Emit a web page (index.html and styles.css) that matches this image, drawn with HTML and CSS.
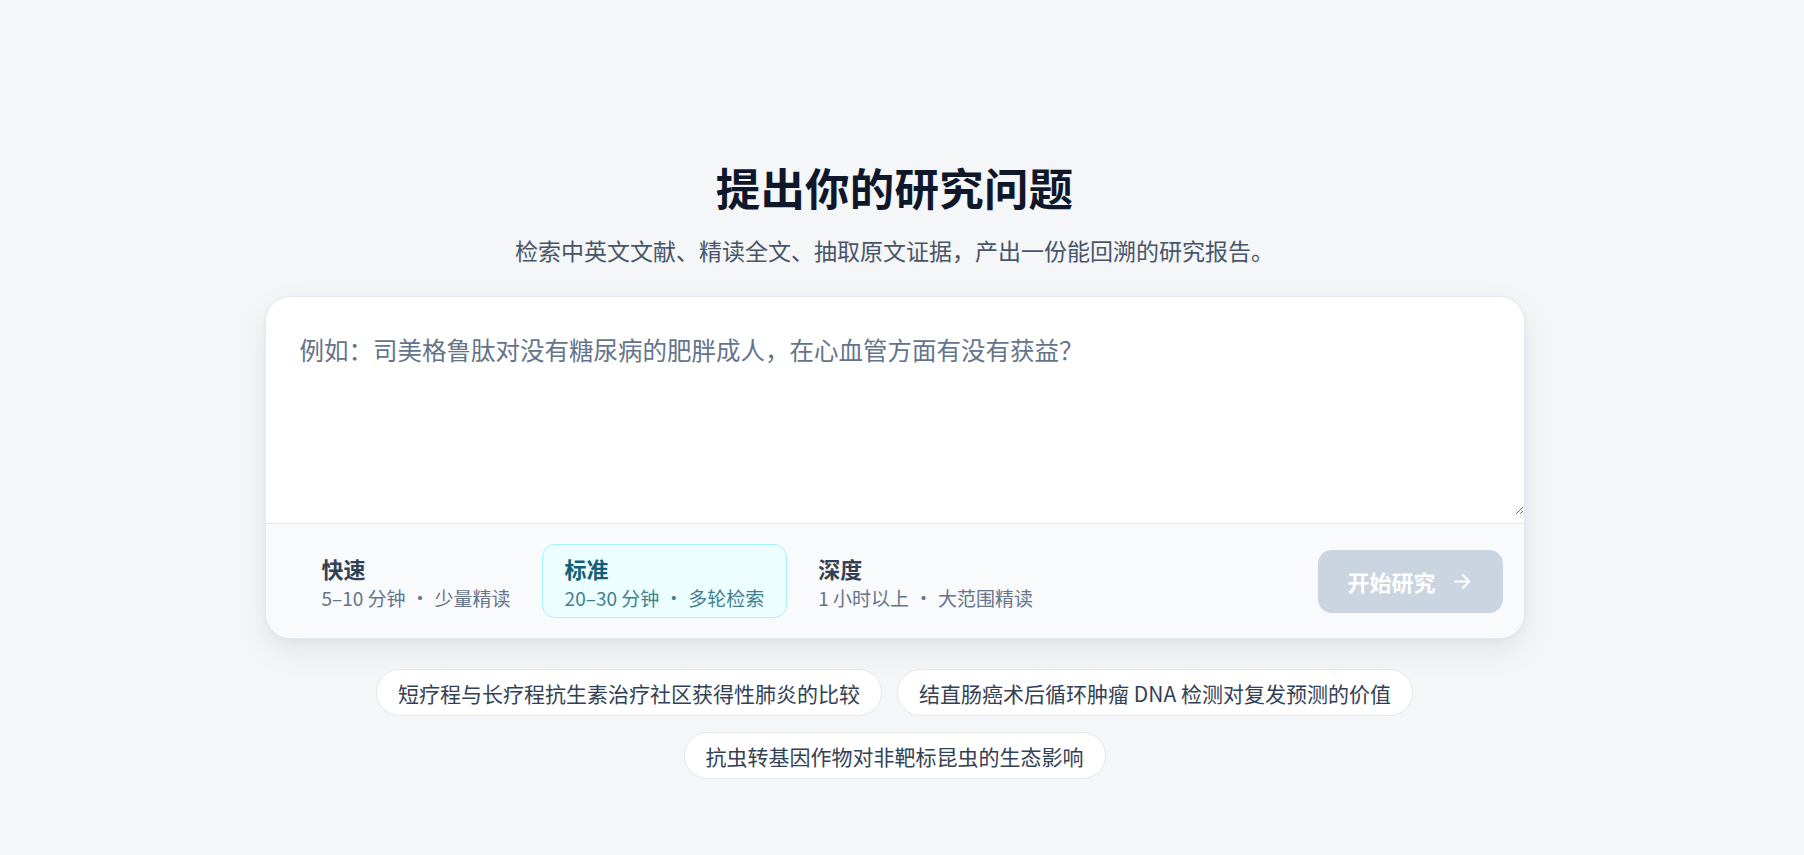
FILE: index.html
```html
<!DOCTYPE html>
<html lang="zh-CN">
<head>
<meta charset="utf-8">
<title>提出你的研究问题</title>
<link rel="stylesheet" href="styles.css">
</head>
<body>
<main class="page">
  <h1 class="title">提出你的研究问题</h1>
  <p class="subtitle">检索中英文文献、精读全文、抽取原文证据，产出一份能回溯的研究报告。</p>

  <section class="composer">
    <div class="question-wrap">
      <textarea class="question" placeholder="例如：司美格鲁肽对没有糖尿病的肥胖成人，在心血管方面有没有获益？"></textarea>
    </div>
    <div class="composer-footer">
      <div class="modes">
        <button class="mode" type="button">
          <span class="mode-name">快速</span>
          <span class="mode-desc">5–10 分钟<span class="sep">·</span>少量精读</span>
        </button>
        <button class="mode is-active" type="button">
          <span class="mode-name">标准</span>
          <span class="mode-desc">20–30 分钟<span class="sep">·</span>多轮检索</span>
        </button>
        <button class="mode" type="button">
          <span class="mode-name">深度</span>
          <span class="mode-desc">1 小时以上<span class="sep">·</span>大范围精读</span>
        </button>
      </div>
      <button class="start" type="button" disabled>
        <span>开始研究</span>
        <svg class="arrow" viewBox="0 0 20 20" width="21" height="21" aria-hidden="true">
          <path d="M3 10h13.5M10.5 4 16.5 10l-6 6" fill="none" stroke="currentColor" stroke-width="2" stroke-linecap="round" stroke-linejoin="round"/>
        </svg>
      </button>
    </div>
  </section>

  <div class="examples">
    <button class="chip" type="button">短疗程与长疗程抗生素治疗社区获得性肺炎的比较</button>
    <button class="chip" type="button">结直肠癌术后循环肿瘤 DNA 检测对复发预测的价值</button>
    <button class="chip" type="button">抗虫转基因作物对非靶标昆虫的生态影响</button>
  </div>
</main>
</body>
</html>
```

FILE: styles.css
```css
* {
  box-sizing: border-box;
}

html, body {
  margin: 0;
  padding: 0;
}

body {
  background: #f4f6f8;
  font-family: "Noto Sans CJK SC", "Noto Sans", sans-serif;
  color: #0f172a;
  min-height: 100vh;
}

/* right padding mirrors the scrollbar gutter of the original layout */
.page {
  display: flex;
  flex-direction: column;
  align-items: center;
  padding: 160px 15px 40px 0;
}

.title {
  margin: 0;
  font-size: 44.5px;
  line-height: 53px;
  font-weight: 700;
  color: #0f172a;
  letter-spacing: 0.2px;
}

.subtitle {
  margin: 20px 0 0;
  font-size: 23px;
  line-height: 35px;
  color: #475569;
}

.composer {
  margin-top: 28px;
  width: 1260px;
  background: #ffffff;
  border: 1px solid #e2e8f0;
  border-radius: 26px;
  box-shadow: 0 12px 32px rgba(15, 23, 42, 0.08), 0 2px 6px rgba(15, 23, 42, 0.03);
  overflow: hidden;
}

.question-wrap {
  padding-bottom: 8px;
  background: #ffffff;
}

.question {
  display: block;
  width: 100%;
  height: 218px;
  border: none;
  outline: none;
  resize: vertical;
  padding: 33px 34px;
  font-family: inherit;
  font-size: 24.5px;
  line-height: 40px;
  color: #0f172a;
  background: #ffffff;
}

.question::placeholder {
  color: #64748b;
}

.composer-footer {
  display: flex;
  align-items: center;
  justify-content: space-between;
  border-top: 1px solid #e2e8f0;
  background: #f8fafc;
  padding: 20px 21px 20px 33px;
}

.modes {
  display: flex;
  gap: 8px;
}

.mode {
  display: flex;
  flex-direction: column;
  align-items: flex-start;
  padding: 8px 22px 6px;
  border: 1px solid transparent;
  border-radius: 13px;
  background: transparent;
  font-family: inherit;
  text-align: left;
  cursor: pointer;
}

.mode-name {
  font-size: 22px;
  line-height: 30px;
  font-weight: 700;
  color: #334155;
}

.mode-desc {
  margin-top: 2px;
  font-size: 19px;
  line-height: 26px;
  color: #64748b;
  white-space: nowrap;
}

.sep {
  margin: 0 5px;
}

.mode.is-active {
  background: #ecfeff;
  border-color: #a5f3fc;
}

.mode.is-active .mode-name {
  color: #155e75;
}

.mode.is-active .mode-desc {
  color: #3f7f8f;
}

.start {
  display: flex;
  align-items: center;
  gap: 16px;
  height: 63px;
  padding: 0 30px 0 29px;
  border: none;
  border-radius: 14px;
  background: #cbd5e1;
  color: #ffffff;
  font-family: inherit;
  font-size: 22px;
  font-weight: 700;
}

.arrow {
  display: block;
}

.examples {
  margin-top: 30px;
  width: 1260px;
  display: flex;
  flex-wrap: wrap;
  justify-content: center;
  gap: 16px 15px;
}

.chip {
  height: 47px;
  padding: 0 21px;
  border: 1px solid #e2e8f0;
  border-radius: 999px;
  background: #ffffff;
  font-family: inherit;
  font-size: 21px;
  color: #334155;
  cursor: pointer;
  white-space: nowrap;
}
```
